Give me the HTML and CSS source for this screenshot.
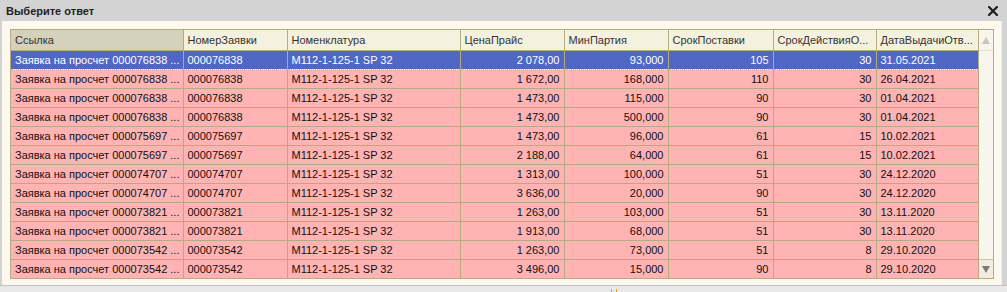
FILE: index.html
```html
<!DOCTYPE html>
<html lang="ru">

<head>
    <meta charset="UTF-8">
    <title>Выберите ответ</title>
    <link rel="stylesheet" href="styles.css">
</head>

<body>
    <div class="window">
        <div class="title-bar">
            <span class="title">Выберите ответ</span>
            <svg class="close" width="10" height="10" viewBox="0 0 10 10">
                <path d="M1 1 L9 9 M9 1 L1 9" stroke="#1e1e1e" stroke-width="2.2" stroke-linecap="square" />
            </svg>
        </div>

        <div class="content">
            <div class="grid-wrap">
                <table class="grid">
                    <colgroup>
                        <col class="c-ref">
                        <col class="c-num">
                        <col class="c-nom">
                        <col class="c-price">
                        <col class="c-min">
                        <col class="c-term">
                        <col class="c-valid">
                        <col class="c-date">
                    </colgroup>
                    <thead>
                        <tr>
                            <th class="sorted">Ссылка</th>
                            <th>НомерЗаявки</th>
                            <th>Номенклатура</th>
                            <th>ЦенаПрайс</th>
                            <th>МинПартия</th>
                            <th>СрокПоставки</th>
                            <th>СрокДействияО...</th>
                            <th>ДатаВыдачиОтв...</th>
                        </tr>
                    </thead>
                    <tbody id="rows"></tbody>
                </table>
                <div class="scrollbar">
                    <div class="scroll-btn up"><span class="arrow-up"></span></div>
                    <div class="scroll-track"></div>
                    <div class="scroll-btn down"><span class="arrow-down"></span></div>
                </div>
            </div>
        </div>
        <div class="status"><span class="mark"></span></div>
    </div>

    <script>
        const data = [
            ["000076838", "2 078,00", "93,000", 105, 30, "31.05.2021"],
            ["000076838", "1 672,00", "168,000", 110, 30, "26.04.2021"],
            ["000076838", "1 473,00", "115,000", 90, 30, "01.04.2021"],
            ["000076838", "1 473,00", "500,000", 90, 30, "01.04.2021"],
            ["000075697", "1 473,00", "96,000", 61, 15, "10.02.2021"],
            ["000075697", "2 188,00", "64,000", 61, 15, "10.02.2021"],
            ["000074707", "1 313,00", "100,000", 51, 30, "24.12.2020"],
            ["000074707", "3 636,00", "20,000", 90, 30, "24.12.2020"],
            ["000073821", "1 263,00", "103,000", 51, 30, "13.11.2020"],
            ["000073821", "1 913,00", "68,000", 51, 30, "13.11.2020"],
            ["000073542", "1 263,00", "73,000", 51, 8, "29.10.2020"],
            ["000073542", "3 496,00", "15,000", 90, 8, "29.10.2020"]
        ];

        const tbody = document.getElementById("rows");

        data.forEach((row, i) => {
            const tr = document.createElement("tr");
            if (i === 0) tr.classList.add("selected");
            tr.innerHTML = `
                <td>Заявка на просчет ${row[0]} ...</td>
                <td>${row[0]}</td>
                <td>М112-1-125-1 SP 32</td>
                <td class="num">${row[1]}</td>
                <td class="num">${row[2]}</td>
                <td class="num">${row[3]}</td>
                <td class="num">${row[4]}</td>
                <td>${row[5]}</td>
            `;
            tbody.appendChild(tr);
        });
    </script>
</body>

</html>
```

FILE: styles.css
```css
body {
    margin: 0;
    padding: 0;
    background-color: #d3d3d3;
    font-family: "Liberation Sans", Arial, sans-serif;
    font-size: 11px;
    color: #000;
}

.window {
    width: 1007px;
    height: 292px;
    background-color: #d3d3d3;
    overflow: hidden;
}

.title-bar {
    height: 21px;
    display: flex;
    align-items: center;
    justify-content: space-between;
    padding: 0 9px 0 6px;
}

.title {
    font-weight: bold;
    color: #222;
    font-size: 11px;
}

.close {
    display: block;
    margin-top: 1px;
}

.content {
    margin: 0 5px 0 2px;
    height: 264px;
    background-color: #fef9ee;
    padding: 8px 0 0 8px;
    box-sizing: border-box;
    border-right: 1px solid #f2efe6;
}

.grid-wrap {
    display: flex;
    width: 983px;
    border-top: 1px solid #b4ab83;
    border-left: 1px solid #b4ab83;
}

.grid {
    border-collapse: collapse;
    table-layout: fixed;
    width: 967px;
}

.c-ref { width: 172px; }
.c-num { width: 104px; }
.c-nom { width: 173px; }
.c-price { width: 104px; }
.c-min { width: 104px; }
.c-term { width: 105px; }
.c-valid { width: 103px; }
.c-date { width: 102px; }

.grid th,
.grid td {
    border-right: 1px solid #b4ab83;
    border-bottom: 1px solid #b4ab83;
    padding: 0 4px;
    white-space: nowrap;
    overflow: hidden;
    text-align: left;
}

.grid th {
    height: 20px;
    background-color: #f4f1de;
    font-weight: normal;
    color: #333;
}

.grid th.sorted {
    background-color: #d5d1bb;
}

.grid td {
    height: 18px;
    background-color: #ffb3b3;
    color: #111;
}

.grid td.num {
    text-align: right;
}

.grid tr.selected td {
    background-color: #5068c3;
    color: #fff;
    border-top: 1px dotted #c8c070;
    border-bottom: 1px dotted #c8c070;
}

.scrollbar {
    width: 16px;
    display: flex;
    flex-direction: column;
    border-right: 1px solid #b4ab83;
    border-bottom: 1px solid #b4ab83;
    box-sizing: border-box;
    background-color: #f8f6ec;
}

.scroll-btn {
    display: flex;
    align-items: center;
    justify-content: center;
}

.scroll-btn.up {
    height: 21px;
    border-bottom: 1px solid #e6e2d0;
    box-sizing: border-box;
}

.scroll-btn.down {
    height: 19px;
    background-color: #f1eedf;
    border-top: 1px solid #c9c3a4;
    box-sizing: border-box;
}

.scroll-track {
    flex: 1;
}

.arrow-up {
    width: 0;
    height: 0;
    border-left: 4px solid transparent;
    border-right: 4px solid transparent;
    border-bottom: 7px solid #c4c4c4;
}

.arrow-down {
    width: 0;
    height: 0;
    border-left: 4px solid transparent;
    border-right: 4px solid transparent;
    border-top: 7px solid #7a7a7a;
}

.status {
    height: 7px;
    background-color: #e9e9e9;
    border-top: 1px solid #c3c3c3;
    position: relative;
}

.mark {
    position: absolute;
    left: 611px;
    top: 3px;
    width: 4px;
    height: 3px;
    border-left: 1px solid #d9a040;
    border-right: 1px solid #d9a040;
}
```
